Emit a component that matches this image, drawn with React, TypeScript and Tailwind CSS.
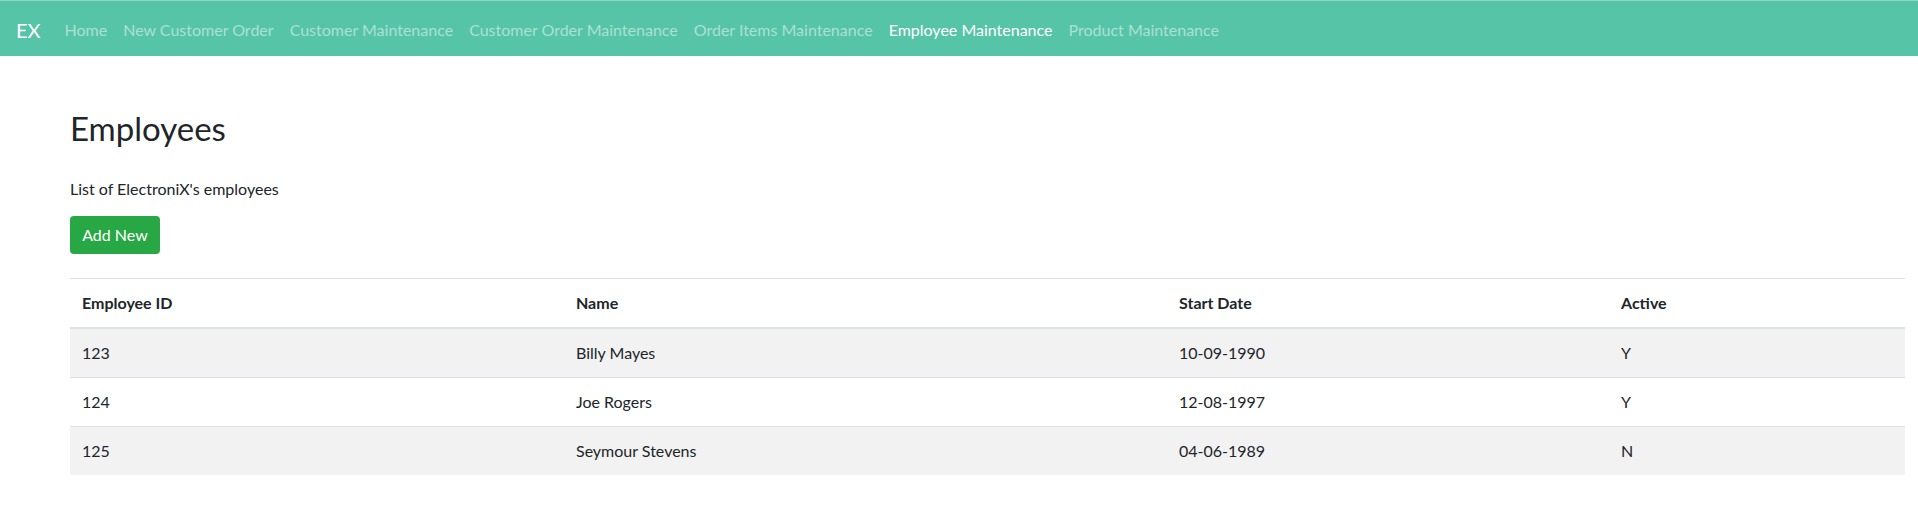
const links = [
  { label: "Home", active: false },
  { label: "New Customer Order", active: false },
  { label: "Customer Maintenance", active: false },
  { label: "Customer Order Maintenance", active: false },
  { label: "Order Items Maintenance", active: false },
  { label: "Employee Maintenance", active: true },
  { label: "Product Maintenance", active: false },
];

const employees = [
  { id: "123", name: "Billy Mayes", start: "10-09-1990", active: "Y" },
  { id: "124", name: "Joe Rogers", start: "12-08-1997", active: "Y" },
  { id: "125", name: "Seymour Stevens", start: "04-06-1989", active: "N" },
];

export default function App() {
  return (
    <div className="min-h-screen bg-white text-[#212529] font-['Lato','Liberation_Sans',sans-serif] text-[16px] leading-[1.5]">
      {/* Navbar */}
      <nav className="h-[56px] bg-[#56c4a6] border-t border-[#8fd6c2] flex items-center px-4 pt-[2px]">
        <span className="text-white text-[20px] mr-4">EX</span>
        <ul className="flex items-center">
          {links.map((l) => (
            <li key={l.label}>
              <a
                className={
                  "block px-2 py-2 " +
                  (l.active ? "text-white" : "text-white/50")
                }
              >
                {l.label}
              </a>
            </li>
          ))}
        </ul>
      </nav>

      {/* Content */}
      <div className="ml-[70px] mr-[13px] mt-[53px]">
        <h1 className="text-[33px] font-normal leading-[1.2] mb-[28px]">Employees</h1>
        <p className="mb-[15px]">List of ElectroniX's employees</p>
        <button className="bg-[#28a745] text-white rounded-[4px] px-3 py-[6px] h-[38px] w-[90px]">
          Add New
        </button>

        <table className="w-full mt-[24px] text-left">
          <thead>
            <tr className="border-t border-[#dee2e6] border-b-2">
              <th className="px-3 py-3 font-bold w-[494px]">Employee ID</th>
              <th className="px-3 py-3 font-bold w-[603px]">Name</th>
              <th className="px-3 py-3 font-bold w-[442px]">Start Date</th>
              <th className="px-3 py-3 font-bold">Active</th>
            </tr>
          </thead>
          <tbody>
            {employees.map((e, i) => (
              <tr
                key={e.id}
                className={
                  "border-t border-[#dee2e6] " + (i % 2 === 0 ? "bg-[#f2f2f2]" : "bg-white")
                }
              >
                <td className="px-3 py-3">{e.id}</td>
                <td className="px-3 py-3">{e.name}</td>
                <td className="px-3 py-3">{e.start}</td>
                <td className="px-3 py-3">{e.active}</td>
              </tr>
            ))}
          </tbody>
        </table>
      </div>
    </div>
  );
}
